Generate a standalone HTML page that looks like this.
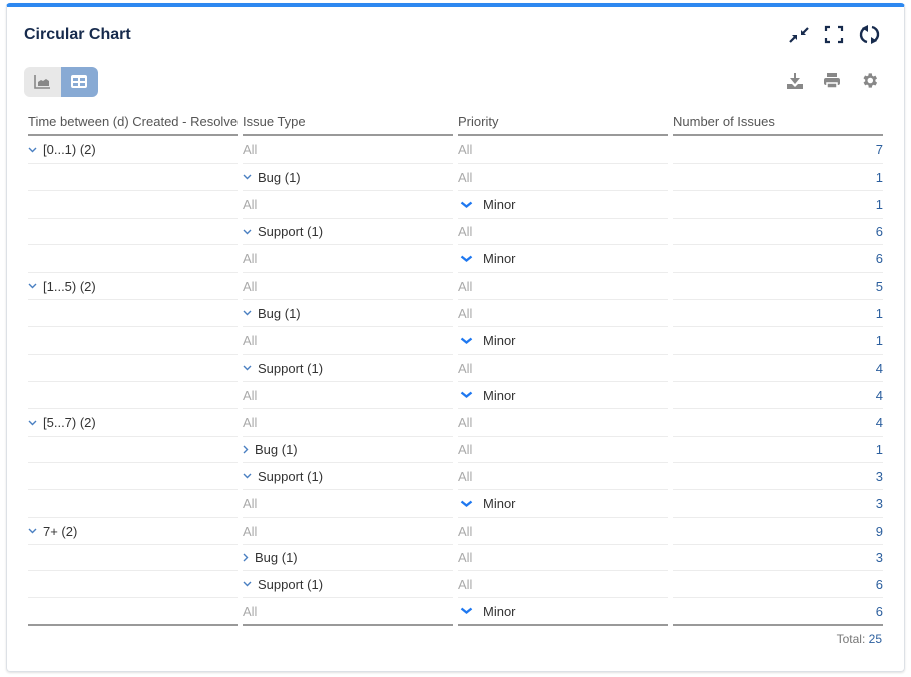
<!DOCTYPE html>
<html><head><meta charset="utf-8"><style>
*{box-sizing:border-box;margin:0;padding:0}
body{width:911px;height:677px;background:#fff;font-family:"Liberation Sans",Arial,sans-serif;position:relative;overflow:hidden}
.card{position:absolute;left:6px;top:3px;width:899px;height:669px;border:1px solid #dde1e6;border-top:4px solid #2d88f0;border-radius:4px;box-shadow:0 1px 2px rgba(0,0,0,.12)}
.title{position:absolute;left:24px;top:26px;font-size:16px;color:#172b4d;font-weight:bold}
.ic{position:absolute}
.cell{position:absolute;font-size:13px;color:#333;display:flex;align-items:center;border-bottom:1px solid #ececec;white-space:nowrap;overflow:hidden}
.h{color:#555;border-bottom:2px solid #999;font-size:13px;padding-right:2px}
.all{color:#aaa}
.num{color:#2c5f9e;justify-content:flex-end}
.chv{display:inline-block;width:9px;margin-right:6px}
.last{border-bottom:2px solid #999}
</style></head><body>
<div class="card"></div>
<div class="title">Circular Chart</div>
<svg class="ic" style="left:788px;top:25px" width="22" height="20" viewBox="0 0 22 20"><g stroke="#172b4d" stroke-width="2.2" fill="#172b4d"><line x1="2" y1="17" x2="8" y2="11"/><polygon points="4,10 9,10 9,15" stroke="none"/><line x1="20" y1="3" x2="14" y2="9"/><polygon points="13,5 13,10 18,10" stroke="none"/></g></svg>
<svg class="ic" style="left:824px;top:25px" width="20" height="19" viewBox="0 0 20 19" fill="none" stroke="#172b4d" stroke-width="2.2"><path d="M2 6V2h4M14 2h4v4M18 13v4h-4M6 17H2v-4"/></svg>
<svg class="ic" style="left:859px;top:24px" width="21" height="21" viewBox="0 0 21 21" fill="none" stroke="#172b4d" stroke-width="2.4"><path d="M6 4A7.5 7.5 0 0 0 8 18"/><path d="M15 17A7.5 7.5 0 0 0 13 3"/><polygon points="9,1 9,8 3,4" fill="#172b4d" stroke="none"/><polygon points="12,20 12,13 18,17" fill="#172b4d" stroke="none"/></svg>
<svg class="ic" style="left:786px;top:72px" width="18" height="18" viewBox="0 0 18 18" fill="#888"><rect x="8" y="1" width="2" height="8"/><polygon points="4,6 14,6 9,12"/><path d="M1 12h5l3 3 3-3h5v5H1z"/></svg>
<svg class="ic" style="left:823px;top:72px" width="18" height="17" viewBox="0 0 18 17" fill="#888"><rect x="4" y="1" width="10" height="4"/><rect x="1" y="6" width="16" height="7" rx="2"/><rect x="4" y="11" width="10" height="5" fill="#888" stroke="#fff" stroke-width="1.5"/></svg>
<svg class="ic" style="left:860px;top:71px" width="19" height="19" viewBox="0 0 24 24" fill="#888"><path d="M19.4 13a7.5 7.5 0 0 0 0-2l2.1-1.6-2-3.5-2.5 1a7 7 0 0 0-1.7-1L15 3h-4l-.4 2.7a7 7 0 0 0-1.700 1l-2.5-1-2 3.5L6.6 11a7.5 7.5 0 0 0 0 2l-2.1 1.6 2 3.5 2.5-1a7 7 0 0 0 1.7 1L11 21h4l.4-2.7a7 7 0 0 0 1.7-1l2.5 1 2-3.5zM13 15.5a3.5 3.5 0 1 1 0-7 3.5 3.5 0 0 1 0 7z"/></svg>
<div style="position:absolute;left:24px;top:67px;width:37px;height:30px;background:#e8e8e8;border-radius:6px 0 0 6px"></div>
<div style="position:absolute;left:61px;top:67px;width:37px;height:30px;background:#88aad4;border-radius:0 6px 6px 0"></div>
<svg class="ic" style="left:34px;top:74px" width="17" height="15" viewBox="0 0 17 15"><path d="M1 1v13h15" stroke="#888" stroke-width="1.6" fill="none"/><path d="M4 12V8l3-2 2 1 3-2 3 2v5z" fill="#888"/></svg>
<svg class="ic" style="left:71px;top:75px" width="16" height="13" viewBox="0 0 16 13"><rect x="0" y="0" width="16" height="13" rx="2" fill="#fff"/><g fill="#88aad4"><rect x="2" y="3" width="5" height="3"/><rect x="9" y="3" width="5" height="3"/><rect x="2" y="8" width="5" height="3"/><rect x="9" y="8" width="5" height="3"/></g></svg>
<div id="t"></div>
<div style="position:absolute;right:29px;top:632px;font-size:12px;color:#777">Total: <span style="color:#2c5f9e">25</span></div>
<script>
var cols=[28,243,458,673],W=210;
var h='';
function cell(ci,top,ht,content,cls){h+='<div class="cell '+(cls||'')+'" style="left:'+cols[ci]+'px;top:'+top+'px;width:'+W+'px;height:'+ht+'px">'+content+'</div>';}
var hd=['Time between (d) Created - Resolved','Issue Type','Priority','Number of Issues'];
hd.forEach(function(t,i){cell(i,108,28,t,'h');});
var dn='<svg class="chv" width="9" height="6" viewBox="0 0 9 6"><path d="M1 1l3.5 3.5L8 1" stroke="#4a7fc1" stroke-width="1.4" fill="none"/></svg>';
var rt='<svg class="chv" style="width:6px;margin-right:6px" width="6" height="9" viewBox="0 0 6 9"><path d="M1 1l3.5 3.5L1 8" stroke="#4a7fc1" stroke-width="1.4" fill="none"/></svg>';
var mn='<svg style="margin-right:10px;margin-left:2px" width="13" height="8" viewBox="0 0 13 8"><path d="M1.5 1.5l5 4 5-4" stroke="#1f78f0" stroke-width="2.4" fill="none"/></svg>Minor';
var A='All';
var rows=[
['D[0...1) (2)',A,A,7],['','DBug (1)',A,1],['',A,'M',1],['','DSupport (1)',A,6],['',A,'M',6],
['D[1...5) (2)',A,A,5],['','DBug (1)',A,1],['',A,'M',1],['','DSupport (1)',A,4],['',A,'M',4],
['D[5...7) (2)',A,A,4],['','RBug (1)',A,1],['','DSupport (1)',A,3],['',A,'M',3],
['D7+ (2)',A,A,9],['','RBug (1)',A,3],['','DSupport (1)',A,6],['',A,'M',6]];
var hs=[28,27,28,26,28,27,27,28,27,27,28,26,27,28,27,26,27,28];
var y=136;
rows.forEach(function(r,ri){var ht=hs[ri];var last=ri==rows.length-1?' last':'';
 for(var c=0;c<3;c++){var v=r[c],cls=last,ct='';
  if(v==='All'){ct='All';cls+=' all';}
  else if(v==='M'){ct=mn;}
  else if(v&&v[0]=='D'){ct=dn+v.slice(1);}
  else if(v&&v[0]=='R'){ct=rt+v.slice(1);}
  cell(c,y,ht,ct,cls);}
 cell(3,y,ht,String(r[3]),'num'+last);
 y+=ht;});
document.getElementById('t').innerHTML=h;
</script>
</body></html>
